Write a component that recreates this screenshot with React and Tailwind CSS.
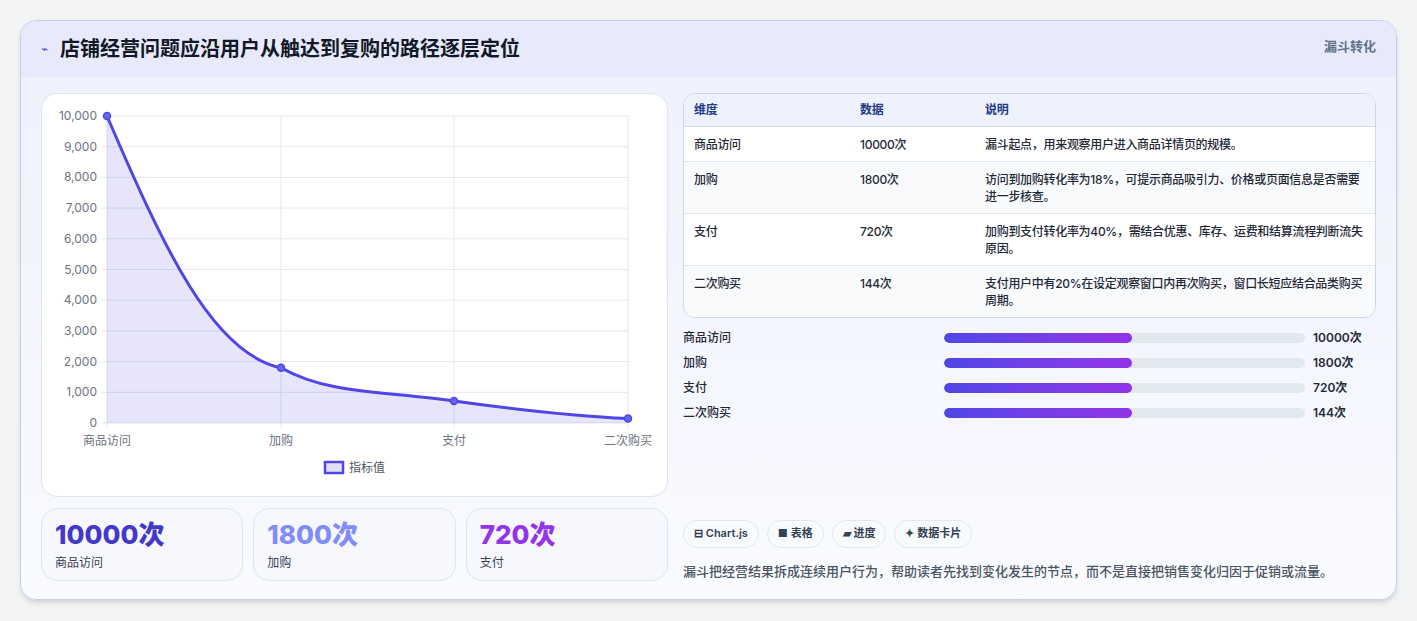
const rows = [
  ["商品访问", "10000次", "漏斗起点，用来观察用户进入商品详情页的规模。"],
  ["加购", "1800次", "访问到加购转化率为18%，可提示商品吸引力、价格或页面信息是否需要进一步核查。"],
  ["支付", "720次", "加购到支付转化率为40%，需结合优惠、库存、运费和结算流程判断流失原因。"],
  ["二次购买", "144次", "支付用户中有20%在设定观察窗口内再次购买，窗口长短应结合品类购买周期。"],
];

function Chart() {
  const L = 65, R = 586, T = 22, B = 329;
  const ys = [0, 1000, 2000, 3000, 4000, 5000, 6000, 7000, 8000, 9000, 10000];
  const y = (v) => B - (v / 10000) * (B - T);
  const xs = [L, 239, 412, R];
  const pts = [[xs[0], y(10000)], [xs[1], y(1800)], [xs[2], y(720)], [xs[3], y(144)]];
  const line = `M${pts[0][0]},${pts[0][1]} C120,150 170,260 ${pts[1][0]},${pts[1][1]} C285,300 340,297 ${pts[2][0]},${pts[2][1]} C470,315 530,322 ${pts[3][0]},${pts[3][1]}`;
  return (
    <svg width="627" height="403" className="block" style={{ fontFamily: "Inter, 'Noto Sans CJK SC', sans-serif" }}>
      {ys.map((v) => (
        <g key={v}>
          <line x1={L - 6} x2={R} y1={y(v)} y2={y(v)} stroke="#e5e7eb" />
          <text x={L - 10} y={y(v) + 4} textAnchor="end" fontSize="12" fill="#6b7280">{v.toLocaleString("en-US")}</text>
        </g>
      ))}
      {xs.map((x, i) => (
        <line key={i} x1={x} x2={x} y1={T} y2={B + 6} stroke="#e5e7eb" />
      ))}
      {["商品访问", "加购", "支付", "二次购买"].map((t, i) => (
        <text key={t} x={xs[i]} y={351} textAnchor="middle" fontSize="12" fill="#6b7280">{t}</text>
      ))}
      <path d={`${line} L${R},${B} L${L},${B} Z`} fill="#4f46e5" fillOpacity="0.14" />
      <path d={line} fill="none" stroke="#4f46e5" strokeWidth="3" />
      {pts.map((p, i) => (
        <circle key={i} cx={p[0]} cy={p[1]} r="3.5" fill="#6366f1" stroke="#4f46e5" strokeWidth="1.5" />
      ))}
      <rect x="283" y="368" width="18" height="11" fill="#e0e0f8" stroke="#4f46e5" strokeWidth="2.5" />
      <text x="307" y="378" fontSize="12" fill="#4b5563">指标值</text>
    </svg>
  );
}

export default function App() {
  return (
    <div className="w-[1417px] h-[621px] bg-[#f3f4f6] pt-5 px-5" style={{ fontFamily: "Inter, 'Noto Sans CJK SC', sans-serif" }}>
      <div className="h-[580px] rounded-2xl border border-[#c7cdf0] bg-gradient-to-b from-[#eef0fd] to-[#fafbff] shadow-md overflow-hidden">
        <div className="h-[56px] flex items-center justify-between pl-5 pr-5 bg-[#e8eafc]">
          <div className="flex items-center gap-3">
            <span className="text-[#4f46e5] text-xs">⌁</span>
            <h1 className="text-[20px] font-bold text-[#111827]">店铺经营问题应沿用户从触达到复购的路径逐层定位</h1>
          </div>
          <span className="text-[13px] font-semibold text-[#64748b] self-start mt-4">漏斗转化</span>
        </div>
        <div className="flex gap-[15px] px-5 pt-4">
          <div className="w-[627px] flex flex-col gap-[11px]">
            <div className="h-[404px] bg-white border border-[#dfe3f3] rounded-2xl overflow-hidden">
              <Chart />
            </div>
            <div className="grid grid-cols-3 gap-[10px]">
              {[["10000次", "商品访问", "text-[#4338ca]"], ["1800次", "加购", "text-[#818cf8]"], ["720次", "支付", "text-[#9333ea]"]].map(([v, l, c]) => (
                <div key={l} className="h-[73px] rounded-2xl border border-[#dfe3f3] bg-[#f7f8fe] px-[13px] pt-[10px]">
                  <div className={`text-[26px] font-extrabold leading-8 ${c}`}>{v}</div>
                  <div className="text-xs text-[#374151] mt-1">{l}</div>
                </div>
              ))}
            </div>
          </div>
          <div className="flex-1 flex flex-col">
            <div className="rounded-xl border border-[#cfd5e8] bg-white overflow-hidden text-xs text-[#1f2937] tracking-[-0.3px]">
              <div className="grid grid-cols-[166px_125px_1fr] h-[33px] items-center bg-[#eef2fd] border-b border-[#d6dbea] px-[10px] font-semibold text-[#1e3a8a]">
                <span>维度</span><span>数据</span><span>说明</span>
              </div>
              {rows.map(([a, b, c], i) => (
                <div key={a} className={`grid grid-cols-[166px_125px_1fr] px-[10px] pt-[9px] pb-[8px] leading-[17px] font-medium ${i > 0 ? "border-t border-[#e2e6f0]" : ""} ${i % 2 ? "bg-[#f8fafc]" : "bg-white"}`}>
                  <span>{a}</span><span>{b}</span><span>{c}</span>
                </div>
              ))}
            </div>
            <div className="mt-[11px] flex flex-col gap-[7px]">
              {rows.map(([a, b]) => (
                <div key={a} className="flex items-center h-[18px] text-xs font-medium text-[#1f2937]">
                  <span className="w-[261px]">{a}</span>
                  <div className="w-[361px] h-[10px] rounded-full bg-[#e2e8f0] overflow-hidden">
                    <div className="h-full w-[52%] rounded-full bg-gradient-to-r from-[#4f46e5] to-[#9333ea]" />
                  </div>
                  <span className="ml-2 font-semibold">{b}</span>
                </div>
              ))}
            </div>
            <div className="mt-auto">
              <div className="flex gap-2 mb-[14px]">
                {["⊟ Chart.js", "■ 表格", "▰ 进度", "✦ 数据卡片"].map((t) => (
                  <span key={t} className="h-[28px] px-[10px] flex items-center rounded-full border border-[#e2e6f0] bg-[#f8fafc] text-[11px] font-semibold text-[#334155]">{t}</span>
                ))}
              </div>
              <p className="text-[13px] text-[#4b5563] font-medium">漏斗把经营结果拆成连续用户行为，帮助读者先找到变化发生的节点，而不是直接把销售变化归因于促销或流量。</p>
            </div>
          </div>
        </div>
      </div>
    </div>
  );
}
